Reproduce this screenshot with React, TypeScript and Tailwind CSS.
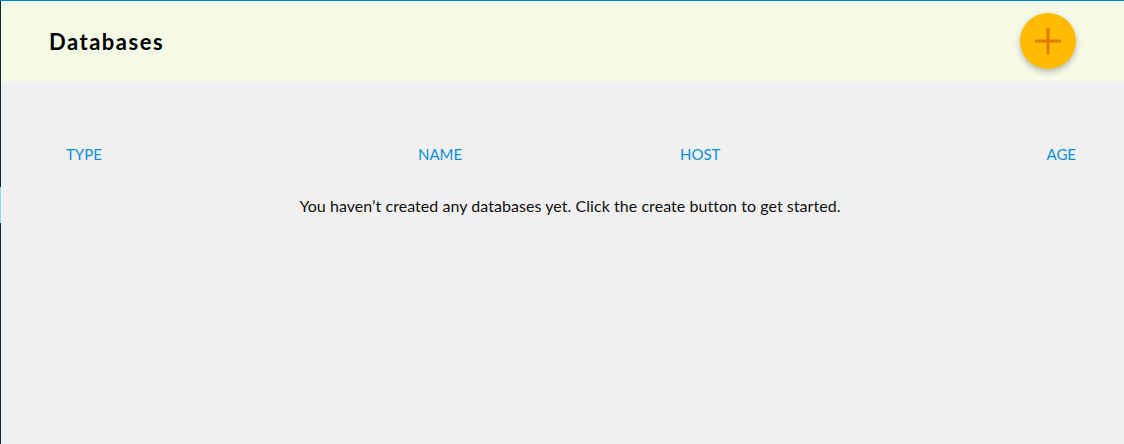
export default function App() {
  const font = { fontFamily: "Lato, 'Open Sans', sans-serif" };
  return (
    <div className="w-[1124px] h-[444px] flex flex-col bg-[#f0f0f0] border-t border-t-[#0080c6] relative overflow-hidden" style={font}>
      <div className="absolute left-0 top-0 bottom-0 w-px bg-[#0b2a3a]" />
      <div className="absolute left-0 top-[186px] h-[36px] w-px bg-[#8fd6f2]" />
      <header className="h-[80px] bg-[#f5fae7] flex items-center justify-between pl-[49px] pr-[48px]">
        <h1 className="text-[22px] font-bold text-black tracking-[1.5px]">Databases</h1>
        <button className="w-[56px] h-[56px] rounded-full bg-[#ffbb00] flex items-center justify-center shadow-[0_3px_6px_rgba(0,0,0,0.25)]">
          <svg width="28" height="28" viewBox="0 0 28 28">
            <rect x="12.5" y="1" width="3" height="26" fill="#e07a00" />
            <rect x="1" y="12.5" width="26" height="3" fill="#e07a00" />
          </svg>
        </button>
      </header>
      <div className="pl-[66px] pr-[48px] pt-[63px]">
        <div className="grid grid-cols-[352px_262px_1fr_auto] text-[15px] text-[#0a8fd2] leading-[20px]">
          <div>TYPE</div>
          <div>NAME</div>
          <div>HOST</div>
          <div className="text-right">AGE</div>
        </div>
        <p className="mt-[32px] text-center text-[16px] text-[#111] leading-[20px] pr-[2px] tracking-[0.05px]">
          You haven’t created any databases yet. Click the create button to get started.
        </p>
      </div>
    </div>
  );
}
